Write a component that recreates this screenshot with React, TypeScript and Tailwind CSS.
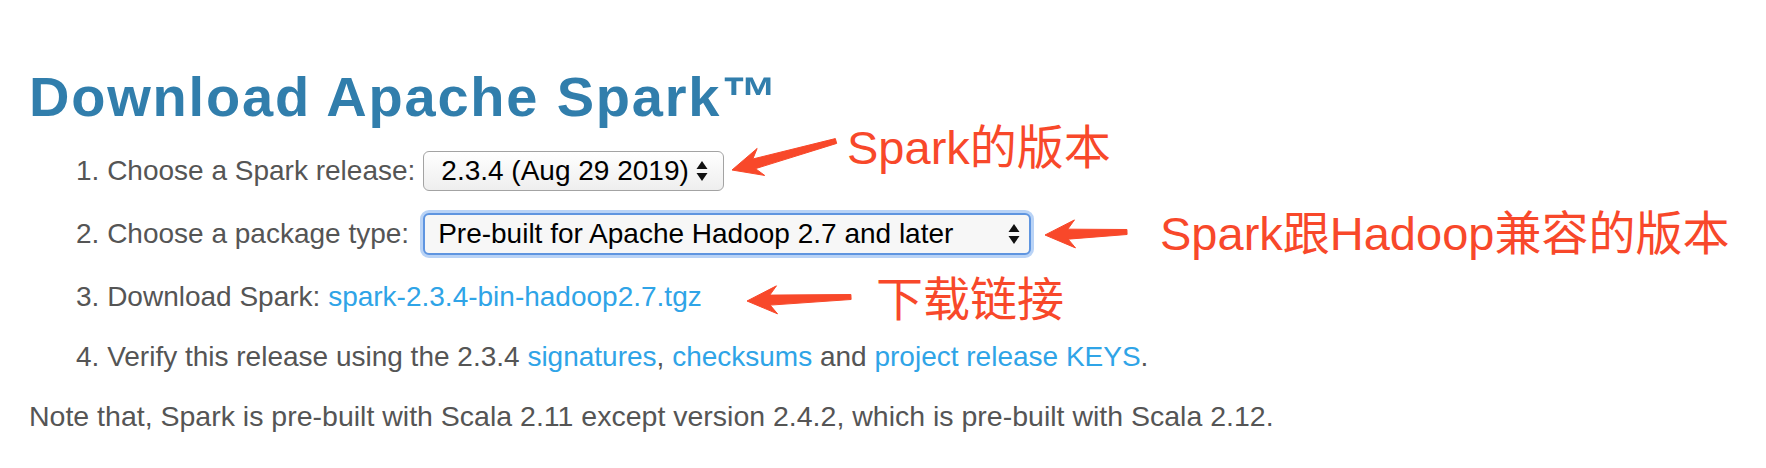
import React from 'react';

type Pt = [number, number];

// red skitch-style arrows laid over the page
const ARROWS: { tip: Pt; tail: Pt }[] = [
  { tip: [732, 170], tail: [836, 141] },
  { tip: [1045, 235], tail: [1127, 232] },
  { tip: [747, 301], tail: [851, 297] },
];

function arrowPoints(tip: Pt, tail: Pt) {
  const dx = tail[0] - tip[0];
  const dy = tail[1] - tip[1];
  const len = Math.hypot(dx, dy);
  const ux = dx / len;
  const uy = dy / len;
  const nx = -uy;
  const ny = ux;
  const p = (a: number, b: number) => `${tip[0] + ux * a + nx * b},${tip[1] + uy * a + ny * b}`;
  return [p(0, 0), p(30, 14), p(23, 5), p(len, 2.5), p(len, -2.5), p(23, -5), p(30, -14)].join(' ');
}

const SelectArrows = () => (
  <svg width="12" height="22" viewBox="0 0 12 22" className="shrink-0">
    <polygon points="6,1 11.5,9 0.5,9" fill="#111" />
    <polygon points="0.5,13 11.5,13 6,21" fill="#111" />
  </svg>
);

const App: React.FC = () => {
  return (
    <div className="relative w-[1766px] h-[468px] bg-white overflow-hidden pl-[29px] pt-[69px] font-['Liberation_Sans',Arial,sans-serif] text-[#555555]">
      <h1 className="text-[56px] leading-[56px] font-bold tracking-[1.8px] text-[#317eac]">
        Download Apache Spark™
      </h1>

      <ul className="pl-[47px] mt-[26px] text-[28px] leading-[40px]">
        <li className="flex items-center h-[40px] mb-[23px]">
          <span>1. Choose a Spark release:</span>
          <div className="ml-[8px] flex items-center justify-between w-[301px] h-[40px] pl-[17px] pr-[15px] rounded-[6px] border border-[#a3a3a3] bg-gradient-to-b from-white to-[#eeeeee] text-black">
            <span>2.3.4 (Aug 29 2019)</span>
            <SelectArrows />
          </div>
        </li>
        <li className="flex items-center h-[40px] mb-[23px]">
          <span>2. Choose a package type:</span>
          <div className="ml-[14px] flex items-center justify-between w-[608px] h-[42px] pl-[13px] pr-[9px] rounded-[6px] border-[2px] border-[#5f95e0] bg-[#f7f7f7] shadow-[0_0_0_3px_#b9d3f6] text-black">
            <span>Pre-built for Apache Hadoop 2.7 and later</span>
            <SelectArrows />
          </div>
        </li>
        <li className="flex items-center h-[40px] mb-[20px]">
          <span>
            3. Download Spark: <a className="text-[#2fa4e7]">spark-2.3.4-bin-hadoop2.7.tgz</a>
          </span>
        </li>
        <li className="flex items-center h-[40px]">
          <span>
            4. Verify this release using the 2.3.4 <a className="text-[#2fa4e7]">signatures</a>,{' '}
            <a className="text-[#2fa4e7]">checksums</a> and <a className="text-[#2fa4e7]">project release KEYS</a>.
          </span>
        </li>
      </ul>

      <p className="mt-[19px] text-[28.5px] leading-[40px]">
        Note that, Spark is pre-built with Scala 2.11 except version 2.4.2, which is pre-built with Scala 2.12.
      </p>

      <svg className="absolute inset-0 pointer-events-none" width="1766" height="468">
        {ARROWS.map((a, i) => (
          <polygon key={i} points={arrowPoints(a.tip, a.tail)} fill="#f8482a" stroke="#f8482a" strokeWidth="1" strokeLinejoin="round" />
        ))}
      </svg>

      <div className="absolute left-[847px] top-[124px] text-[47px] leading-[47px] text-[#f8482a] font-['Liberation_Sans','Noto_Sans_CJK_SC',sans-serif] whitespace-nowrap">
        Spark的版本
      </div>
      <div className="absolute left-[1160px] top-[210px] text-[47px] leading-[47px] text-[#f8482a] font-['Liberation_Sans','Noto_Sans_CJK_SC',sans-serif] whitespace-nowrap">
        Spark跟Hadoop兼容的版本
      </div>
      <div className="absolute left-[876px] top-[276px] text-[47px] leading-[47px] text-[#f8482a] font-['Liberation_Sans','Noto_Sans_CJK_SC',sans-serif] whitespace-nowrap">
        下载链接
      </div>
    </div>
  );
};

export default App;
